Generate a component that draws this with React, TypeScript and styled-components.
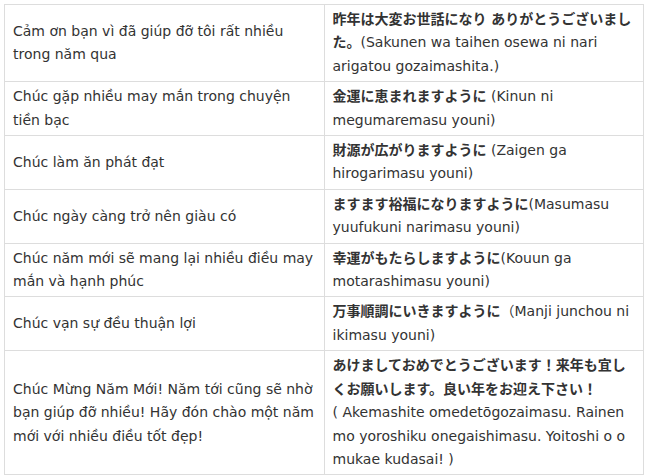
import React from "react";
import styled, { createGlobalStyle } from "styled-components";

const GlobalStyle = createGlobalStyle`
  html, body {
    margin: 0;
    padding: 0;
    background: #ffffff;
  }
  body {
    font-family: "DejaVu Sans", Verdana, "Noto Sans CJK JP", sans-serif;
    font-size: 14px;
    color: #333333;
  }
`;

const Page = styled.div`
  padding: 4px 0 0 4px;
`;

const Table = styled.table`
  width: 640px;
  table-layout: fixed;
  border-collapse: collapse;
  font-family: "DejaVu Sans", Verdana, "Noto Sans CJK JP", sans-serif;
  font-size: 14px;
  line-height: 23.4px;
  color: #333333;
`;

const Cell = styled.td`
  border: 1px solid #dddddd;
  padding: 3px 8px 3px 8px;
  vertical-align: middle;
  word-wrap: break-word;
`;

const Jp = styled.strong`
  font-family: "DejaVu Sans", "Noto Sans CJK JP", sans-serif;
  font-weight: 700;
  color: #333333;
`;

const After = styled.p`
  margin: 0 0 0 10px;
  font-family: "DejaVu Sans", sans-serif;
  font-size: 14px;
  line-height: 23.4px;
  color: #333333;
`;

type Row = { vi: string; jp: string; ro: string; br?: boolean };

const rows: Row[] = [
  {
    vi: "Cảm ơn bạn vì đã giúp đỡ tôi rất nhiều trong năm qua",
    jp: "昨年は大変お世話になり ありがとうございました。",
    ro: "(Sakunen wa taihen osewa ni nari arigatou gozaimashita.)",
  },
  {
    vi: "Chúc gặp nhiều may mắn trong chuyện tiền bạc",
    jp: "金運に恵まれますように",
    ro: " (Kinun ni megumaremasu youni)",
  },
  {
    vi: "Chúc làm ăn phát đạt",
    jp: "財源が広がりますように",
    ro: " (Zaigen ga hirogarimasu youni)",
  },
  {
    vi: "Chúc ngày càng trở nên giàu có",
    jp: "ますます裕福になりますように",
    ro: "(Masumasu yuufukuni narimasu youni)",
  },
  {
    vi: "Chúc năm mới sẽ mang lại nhiều điều may mắn và hạnh phúc",
    jp: "幸運がもたらしますように",
    ro: "(Kouun ga motarashimasu youni)",
  },
  {
    vi: "Chúc vạn sự đều thuận lợi",
    jp: "万事順調にいきますように",
    ro: "（Manji junchou ni ikimasu youni)",
  },
  {
    vi: "Chúc Mừng Năm Mới! Năm tới cũng sẽ nhờ bạn giúp đỡ nhiều! Hãy đón chào một năm mới với nhiều điều tốt đẹp!",
    jp: "あけましておめでとうございます！来年も宜しくお願いします。良い年をお迎え下さい！",
    ro: "( Akemashite omedetōgozaimasu. Rainen mo yoroshiku onegaishimasu. Yoitoshi o o mukae kudasai! )",
    br: true,
  },
];

export default function App() {
  return (
    <>
      <GlobalStyle />
      <Page>
        <Table>
          <tbody>
            {rows.map((r, i) => (
              <tr key={i}>
                <Cell>{r.vi}</Cell>
                <Cell>
                  <Jp>{r.jp}</Jp>
                  {r.br && <br />}
                  {r.ro}
                </Cell>
              </tr>
            ))}
          </tbody>
        </Table>
        <After>Ở Nhật Bản</After>
      </Page>
    </>
  );
}
